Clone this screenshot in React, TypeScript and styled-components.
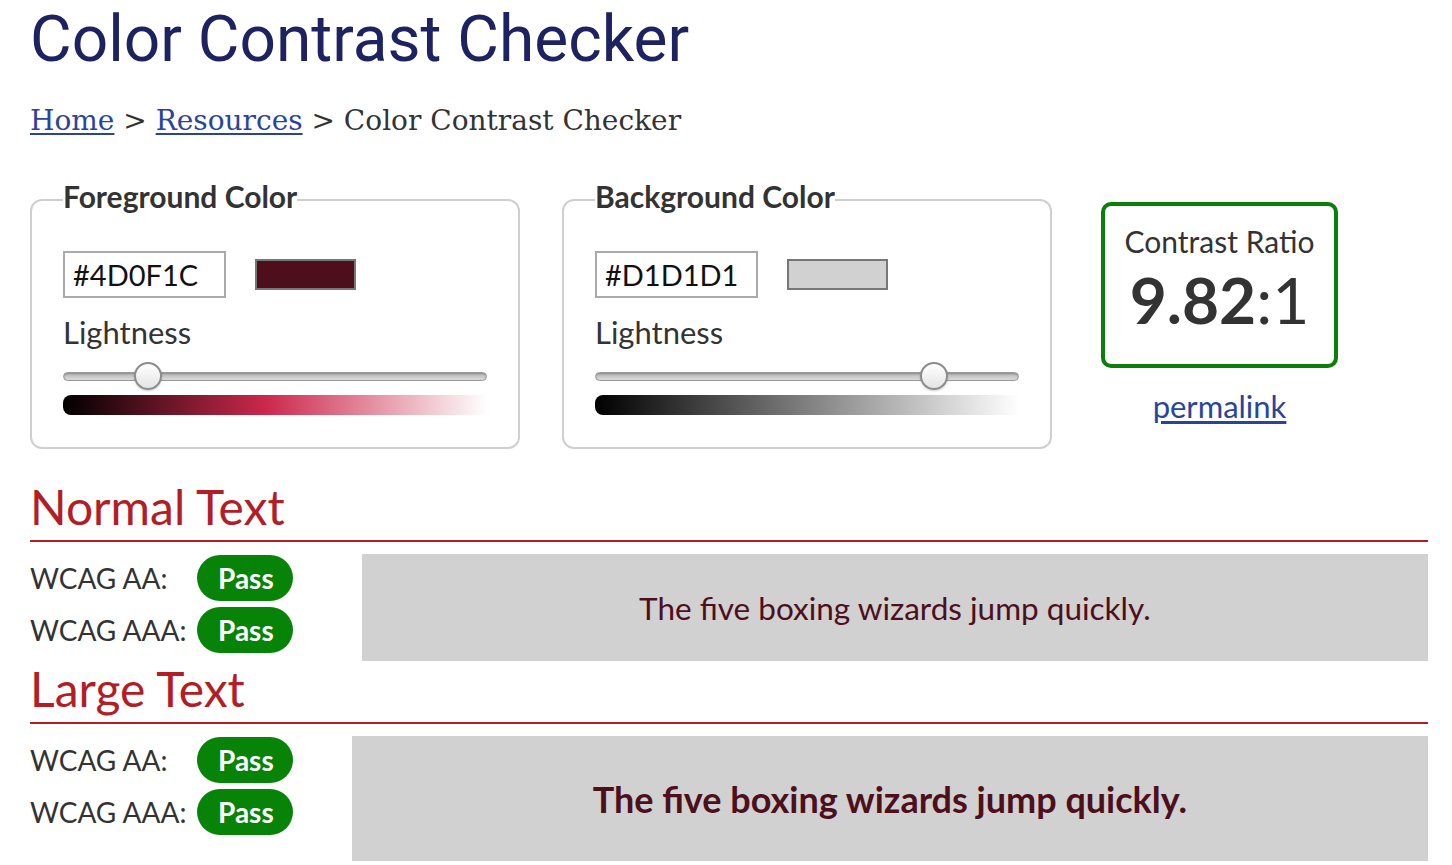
import React from 'react';
import styled, { createGlobalStyle } from 'styled-components';

const GlobalStyle = createGlobalStyle`
	body {
		margin: 0;
		background: #fff;
		font-family: Lato, "Open Sans", sans-serif;
		color: #333;
	}
`;

const Page = styled.div`
	padding: 3px 24px 0 30px;
`;

const Title = styled.h1`
	margin: 0;
	font-family: Roboto, sans-serif;
	font-weight: 400;
	font-size: 64px;
	line-height: 74px;
	color: #1d2260;
`;

const Breadcrumb = styled.nav`
	margin-top: 26px;
	font-family: "DejaVu Serif", serif;
	font-size: 28px;
	line-height: 36px;
	color: #333;

	a {
		color: #2a449c;
		text-decoration: underline;
		text-underline-offset: 3px;
	}
`;

const Tools = styled.div`
	display: flex;
	align-items: flex-start;
	margin-top: 40px;
	gap: 42px;
`;

const ColorSet = styled.fieldset`
	width: 490px;
	box-sizing: border-box;
	margin: 0;
	padding: 31px 31px 32px;
	border: 2px solid #cfcfcf;
	border-radius: 12px;
	min-width: 0;
`;

const Legend = styled.legend`
	padding: 0 0 6px;
	font-weight: 700;
	font-size: 30px;
	line-height: 35px;
	color: #333;
`;

const InputRow = styled.div`
	display: flex;
	align-items: center;
	gap: 29px;
`;

const HexInput = styled.input`
	width: 163px;
	height: 47px;
	box-sizing: border-box;
	border: 2px solid #aaa;
	padding: 0 8px;
	font-family: Lato, sans-serif;
	font-size: 29px;
	color: #111;
	background: #fff;
	outline: none;
`;

const Swatch = styled.div<{ $color: string }>`
	width: 101px;
	height: 31px;
	box-sizing: border-box;
	border: 2px solid #777;
	background: ${p => p.$color};
`;

const FieldLabel = styled.div`
	margin-top: 17px;
	font-size: 31px;
	line-height: 35px;
	color: #333;
`;

const Slider = styled.div`
	position: relative;
	margin-top: 12px;
	height: 28px;
	display: flex;
	align-items: center;
`;

const Track = styled.div`
	width: 100%;
	height: 9px;
	box-sizing: border-box;
	border: 1px solid #999;
	border-radius: 5px;
	background: linear-gradient(#b5b5b5, #dcdcdc);
	box-shadow: inset 0 1px 2px rgba(0, 0, 0, 0.25);
`;

const Thumb = styled.div`
	position: absolute;
	top: 0;
	width: 28px;
	height: 28px;
	margin-left: -14px;
	box-sizing: border-box;
	border-radius: 50%;
	border: 2px solid #8c8c8c;
	background: linear-gradient(#ffffff, #e4e4e4);
	box-shadow: 0 1px 2px rgba(0, 0, 0, 0.2);
`;

const Ramp = styled.div<{ $ramp: string }>`
	margin-top: 5px;
	height: 20px;
	border-radius: 8px 0 0 8px;
	background: ${p => p.$ramp};
`;

const RatioColumn = styled.div`
	display: flex;
	flex-direction: column;
	align-items: center;
	margin-top: 23px;
	margin-left: 7px;
`;

const RatioBox = styled.div`
	width: 237px;
	height: 166px;
	box-sizing: border-box;
	border: 4px solid #0a800a;
	border-radius: 10px;
	padding-top: 17px;
	display: flex;
	flex-direction: column;
	align-items: center;
`;

const RatioLabel = styled.div`
	font-size: 30px;
	line-height: 36px;
	color: #333;
`;

const RatioValue = styled.div`
	margin-top: 9px;
	font-size: 64px;
	line-height: 64px;
	color: #333;

	b {
		font-weight: 700;
	}
`;

const Permalink = styled.a`
	margin-top: 20px;
	font-size: 31px;
	line-height: 36px;
	color: #2a449c;
	text-decoration: underline;
	text-underline-offset: 3px;
`;

const SectionHeading = styled.h2<{ $top: number }>`
	margin: ${p => p.$top}px 0 0;
	padding-bottom: 8px;
	border-bottom: 2px solid #b31d26;
	font-weight: 400;
	font-size: 48px;
	line-height: 50px;
	color: #b31d26;
`;

const ResultRow = styled.div<{ $gap: number }>`
	display: flex;
	align-items: flex-start;
	margin-top: 12px;
	gap: ${p => p.$gap}px;
`;

const Checks = styled.div`
	display: flex;
	flex-direction: column;
	gap: 6px;
	padding-top: 1px;
`;

const Check = styled.div`
	display: flex;
	align-items: center;
	height: 46px;
`;

const CheckLabel = styled.span`
	width: 167px;
	font-size: 28px;
	line-height: 46px;
	color: #333;
`;

const Badge = styled.span`
	height: 46px;
	box-sizing: border-box;
	padding: 0 19px 0 21px;
	border-radius: 23px;
	background: #078307;
	color: #fff;
	font-weight: 700;
	font-size: 28px;
	line-height: 46px;
`;

const Preview = styled.div<{ $large?: boolean }>`
	flex: 1;
	height: ${p => (p.$large ? 125 : 107)}px;
	display: flex;
	align-items: center;
	justify-content: center;
	background: #d1d1d1;
	color: #4d0f1c;
	font-size: ${p => (p.$large ? 36 : 31.5)}px;
	font-weight: ${p => (p.$large ? 700 : 400)};
`;

type ColorPanel = {
	legend: string;
	hex: string;
	position: number;
	ramp: string;
};

const panels: ColorPanel[] = [
	{
		legend: 'Foreground Color',
		hex: '#4D0F1C',
		position: 20,
		ramp: 'linear-gradient(90deg, hsl(347, 67%, 0%), hsl(347, 67%, 48%) 48%, hsl(347, 67%, 100%))',
	},
	{
		legend: 'Background Color',
		hex: '#D1D1D1',
		position: 80,
		ramp: 'linear-gradient(90deg, #000, #808080 50%, #fff)',
	},
];

const sentence = 'The five boxing wizards jump quickly.';

const Results = ({ large }: { large?: boolean }) => (
	<ResultRow $gap={large ? 59 : 69}>
		<Checks>
			<Check>
				<CheckLabel>WCAG AA:</CheckLabel>
				<Badge>Pass</Badge>
			</Check>
			<Check>
				<CheckLabel>WCAG AAA:</CheckLabel>
				<Badge>Pass</Badge>
			</Check>
		</Checks>
		<Preview $large={large}>{sentence}</Preview>
	</ResultRow>
);

export default function App() {
	return (
		<Page>
			<GlobalStyle />
			<Title>Color Contrast Checker</Title>
			<Breadcrumb>
				<a href="#">Home</a> &gt; <a href="#">Resources</a> &gt; Color Contrast Checker
			</Breadcrumb>

			<Tools>
				{panels.map(panel => (
					<ColorSet key={panel.legend}>
						<Legend>{panel.legend}</Legend>
						<InputRow>
							<HexInput defaultValue={panel.hex} />
							<Swatch $color={panel.hex} />
						</InputRow>
						<FieldLabel>Lightness</FieldLabel>
						<Slider>
							<Track />
							<Thumb style={{ left: `${panel.position}%` }} />
						</Slider>
						<Ramp $ramp={panel.ramp} />
					</ColorSet>
				))}
				<RatioColumn>
					<RatioBox>
						<RatioLabel>Contrast Ratio</RatioLabel>
						<RatioValue>
							<b>9.82</b>:1
						</RatioValue>
					</RatioBox>
					<Permalink href="#">permalink</Permalink>
				</RatioColumn>
			</Tools>

			<SectionHeading $top={33}>Normal Text</SectionHeading>
			<Results />
			<SectionHeading $top={3}>Large Text</SectionHeading>
			<Results large />
		</Page>
	);
}
